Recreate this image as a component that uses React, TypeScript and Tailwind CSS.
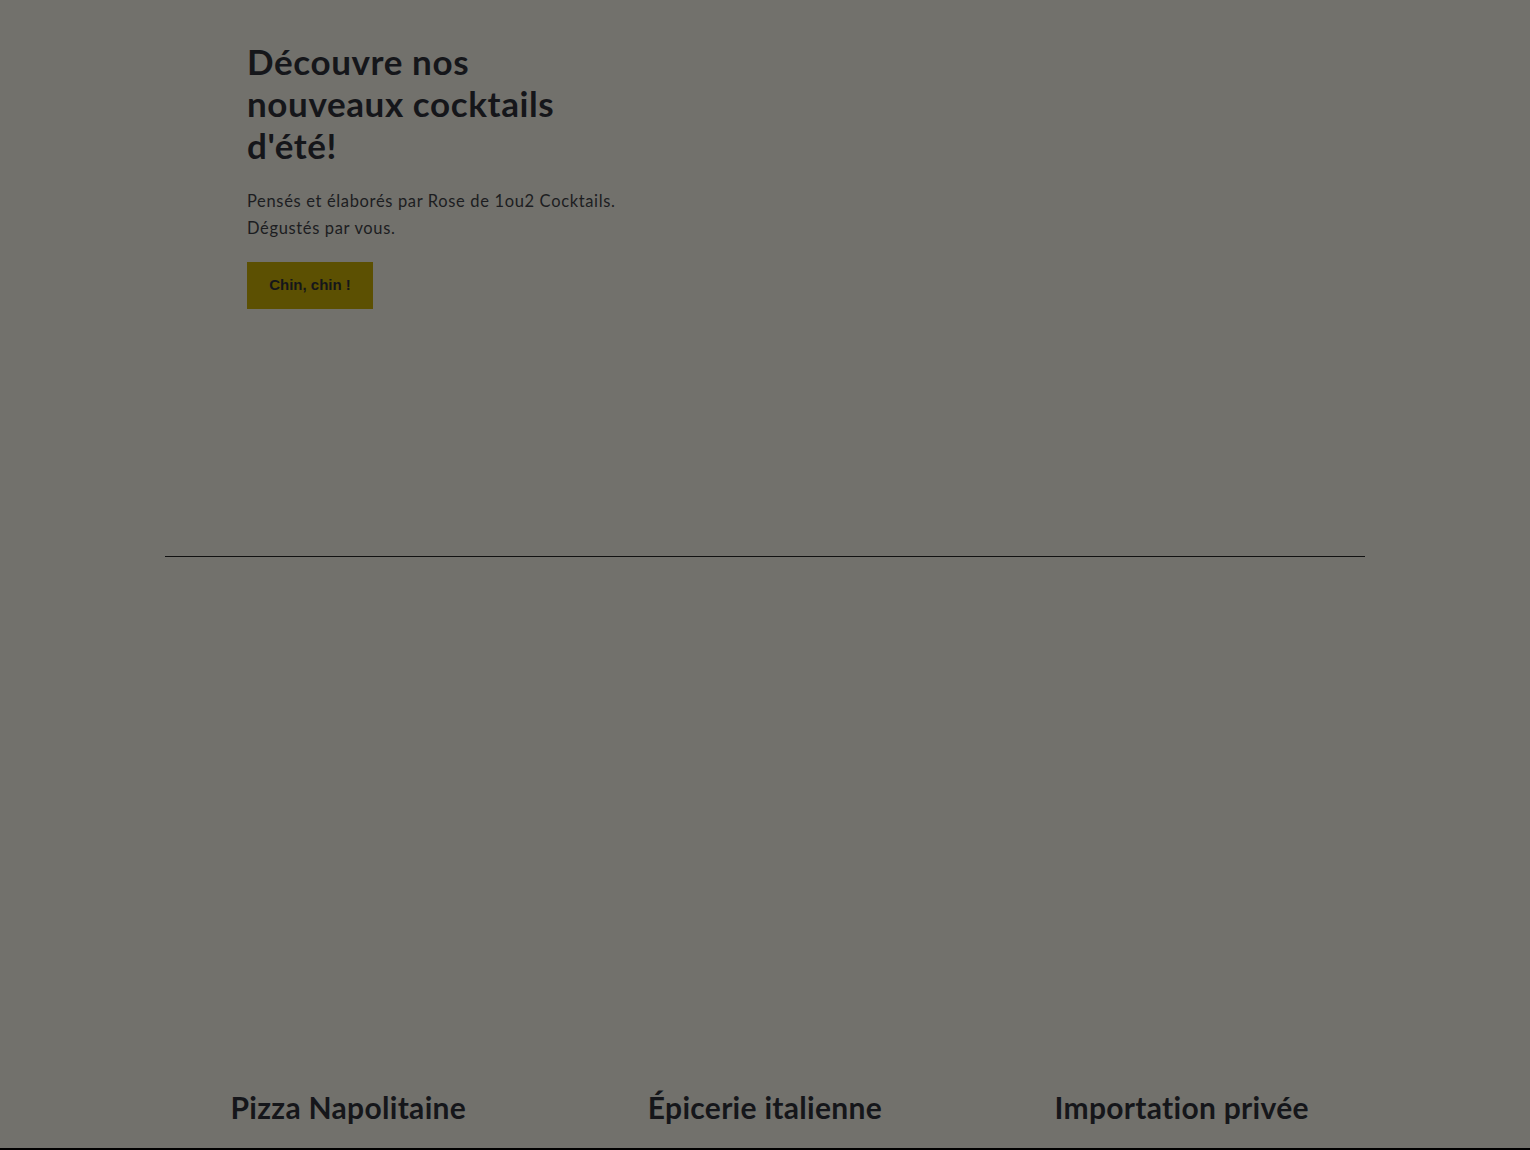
import React from 'react';

const sections = ['Pizza Napolitaine', 'Épicerie italienne', 'Importation privée'];

export default function App() {
  return (
    <div className="relative h-[1150px] w-full overflow-hidden bg-[#72716c] text-[#15161a]" style={{ fontFamily: 'Lato, "Open Sans", sans-serif' }}>
      <section className="mx-auto w-[1200px]">
        <div className="h-[556px] pl-[82px] pt-[40px]">
          <h1 className="w-[360px] text-[35px] font-bold leading-[42px] tracking-[0.6px]">
            Découvre nos nouveaux cocktails d'été!
          </h1>
          <p className="mt-[22px] text-[16.5px] leading-[27px] tracking-[0.65px] text-[#1c1d21]">
            Pensés et élaborés par Rose de 1ou2 Cocktails.
            <br />
            Dégustés par vous.
          </p>
          <button
            type="button"
            className="mt-[20px] h-[47px] w-[126px] bg-[#5c5002] text-[15px] font-bold text-[#15161a]"
            style={{ fontFamily: '"Liberation Sans", Arial, sans-serif' }}
          >
            Chin, chin !
          </button>
        </div>
        <div className="h-px bg-[#111]" />
      </section>

      <section className="mx-auto mt-[530px] grid w-[1250px] grid-cols-3">
        {sections.map((s) => (
          <h2 key={s} className="text-center text-[30px] font-bold leading-[40px] tracking-[0.3px]">
            {s}
          </h2>
        ))}
      </section>

      <div className="absolute bottom-0 left-0 h-[2px] w-full bg-black" />
    </div>
  );
}
